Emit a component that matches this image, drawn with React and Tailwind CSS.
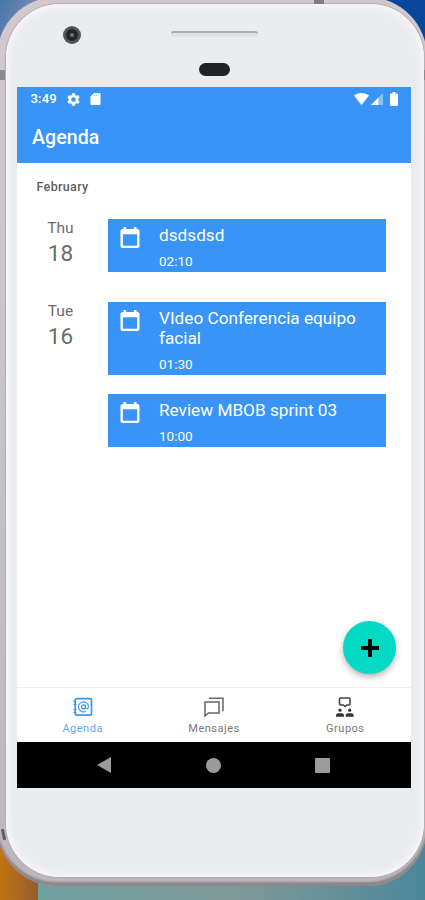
const days = [
  {
    weekday: "Thu",
    day: "18",
    events: [{ title: "dsdsdsd", time: "02:10" }],
  },
  {
    weekday: "Tue",
    day: "16",
    events: [
      { title: "VIdeo Conferencia equipo facial", time: "01:30" },
      { title: "Review MBOB sprint 03", time: "10:00" },
    ],
  },
];

function CalendarIcon() {
  return (
    <svg className="mt-[8px] h-[22px] w-[20px] shrink-0" viewBox="0 0 20 22" fill="#fff">
      <path
        fillRule="evenodd"
        d="M3.500 0h2.600v2h7.800V0h2.600v2h.9q2.100 0 2.100 2v15q0 2-2.100 2H2.600Q.5 21 .5 19V4q0-2 2.100-2h.9zM2.900 7.200v10.600q0 1 1 1h12.200q1 0 1-1V7.200z"
      />
    </svg>
  );
}

function AgendaIcon() {
  return (
    <svg className="h-5 w-5" viewBox="0 0 20 20" fill="none" stroke="#3b94f6">
      <rect x="2.200" y="1.600" width="16.300" height="16.600" rx="1.500" strokeWidth="1.700" />
      <path d="M.4 4.500h3M.4 7.500h3M.4 12.500h3M.4 15.500h3" strokeWidth="1.200" />
      <circle cx="10.500" cy="9.900" r="2" strokeWidth="1.100" />
      <path d="M12.600 7.800v2.600c0 2 2.900 1.700 2.900-.7a5 5 0 1 0-2.300 4.400" strokeWidth="1.100" />
    </svg>
  );
}

function MessagesIcon() {
  return (
    <svg className="h-5 w-5" viewBox="0 0 20 20" fill="none" stroke="#666" strokeWidth="1.500">
      <path d="M1 5h14v11H4.500L1 19V5z" />
      <path d="M5 1.200h14v13" />
    </svg>
  );
}

function GroupsIcon() {
  return (
    <svg className="h-5 w-5" viewBox="0 0 20 20" fill="#333">
      <path
        d="M5.500 1h8.500q1 0 1 1v5q0 1-1 1h-2.300L10 9.500 8.300 8H5.500q-1 0-1-1V2q0-1 1-1z"
        fill="none"
        stroke="#444"
        strokeWidth="1.600"
      />
      <circle cx="5" cy="13.200" r="1.600" />
      <circle cx="14.700" cy="13.200" r="1.600" />
      <path d="M1 19.800v-1.500q0-2 2.500-2h3q2.500 0 2.500 2v1.500zM10.700 19.800v-1.500q0-2 2.500-2h3q2.500 0 2.500 2v1.500z" />
    </svg>
  );
}

const tabs = [
  { label: "Agenda", icon: AgendaIcon, active: true },
  { label: "Mensajes", icon: MessagesIcon },
  { label: "Grupos", icon: GroupsIcon },
];

function StatusBar() {
  return (
    <div className="flex h-6 items-center pl-[13.500px] pr-[13px] text-white">
      <span className="w-[36px] text-[13px] font-medium tracking-[0.2px]">3:49</span>
      <svg className="h-[13px] w-[13px]" viewBox="2 2 20 20" fill="#fff">
        <path d="M19.140 12.940c.04-.3.06-.61.06-.94 0-.32-.02-.64-.07-.94l2.030-1.580c.18-.14.23-.41.12-.61l-1.920-3.320c-.12-.22-.37-.29-.59-.22l-2.390.96c-.5-.38-1.030-.7-1.620-.94l-.36-2.540c-.04-.24-.24-.41-.48-.41h-3.840c-.24 0-.43.17-.47.41l-.36 2.540c-.59.24-1.130.57-1.620.94l-2.390-.96c-.22-.08-.47 0-.59.22L2.740 8.870c-.12.21-.08.47.12.61l2.030 1.580c-.05.3-.09.63-.09.94s.02.64.07.94l-2.030 1.580c-.18.14-.23.41-.12.61l1.920 3.320c.12.22.37.29.59.22l2.390-.96c.5.38 1.030.7 1.620.94l.36 2.540c.05.24.24.41.48.41h3.840c.24 0 .44-.17.47-.41l.36-2.540c.59-.24 1.130-.56 1.620-.94l2.390.96c.22.08.47 0 .59-.22l1.920-3.320c.12-.22.07-.47-.12-.61l-2.010-1.580zM12 15.600a3.600 3.600 0 1 1 0-7.200 3.600 3.600 0 0 1 0 7.200z" />
      </svg>
      <svg className="ml-[10px] h-[12px] w-[11px]" viewBox="0 0 11 12" fill="#fff">
        <path d="M4 0h5.500Q10.500 0 10.500 1v10q0 1-1 1h-8q-1 0-1-1V3.500z" />
        <path d="M4.500 2v1.200M6.500 2v1.200M8.500 2v1.200" stroke="#3894f7" strokeWidth=".5" />
      </svg>
      <div className="ml-auto flex items-center">
        <svg className="h-[12px] w-[15px]" viewBox="0 0 15 12" fill="#fff">
          <path d="M0 2.500Q7.500-2.300 15 2.500L7.500 12z" />
        </svg>
        <svg className="ml-[2px] h-[12px] w-[12px]" viewBox="0 0 12 12" fill="#fff">
          <path d="M12 0v12H0z" opacity=".4" />
          <path d="M7.500 4.500V12H0z" />
        </svg>
        <svg className="ml-[7px] h-[14px] w-[8px]" viewBox="0 0 8 14" fill="#fff">
          <path d="M2.500 0h3v1.500H7q1 0 1 1V13q0 1-1 1H1q-1 0-1-1V2.500q0-1 1-1h1.500z" />
        </svg>
      </div>
    </div>
  );
}

function EventCard({ title, time }) {
  return (
    <div className="flex bg-[#3894f7] pl-[12px] pr-4 text-white">
      <CalendarIcon />
      <div className="ml-[19px] pt-[6px] pb-[2px]">
        <p className="text-[17.200px] leading-5">{title}</p>
        <p className="mt-[7px] text-[13.500px] leading-[18px]">{time}</p>
      </div>
    </div>
  );
}

function Wallpaper() {
  return (
    <div className="absolute inset-0">
      <div className="flex h-1/2">
        <div className="flex-1 bg-linear-to-br from-[#4675ad] to-[#8292ab] to-12%" />
        <div className="flex-1 bg-[#07479b]" />
      </div>
      <div className="flex h-1/2">
        <div className="w-[38px] bg-linear-to-r from-[#c27410] to-[#955d29]" />
        <div className="flex-1 bg-linear-to-r from-[#6fa0a0] via-[#7f9a98] to-[#4c8799]" />
      </div>
    </div>
  );
}

export default function App() {
  return (
    <main className="relative h-[900px] w-[425px] overflow-hidden font-['Roboto',sans-serif]">
      <Wallpaper />

      {/* Device rim */}
      <div className="relative -ml-[3px] -mt-[3px] h-[889px] w-[430px] rounded-[60px] bg-linear-to-b from-[#d3c8cd] via-[#c5c3c6] to-[#bdb6bc] pt-[7px] pr-[3px] pb-[9px] pl-[9px] shadow-[inset_0_-4px_2px_#8d878c]">
        {/* Side keys and antenna lines */}
        <div className="absolute left-[3px] top-[73px] h-[10px] w-[5px] bg-[#8c8a8d]" />
        <div className="absolute left-[317px] top-[3px] h-[4px] w-[10px] bg-[#827c80]" />
        <div className="absolute left-[5px] top-[832px] h-[11px] w-[3px] -rotate-12 bg-[#625d60]" />
        <div className="absolute left-[427px] top-[73px] h-[10px] w-px bg-[#8c8a8d]" />

        <div className="h-full rounded-[54px] bg-[#ebecee] pl-[11px] pr-[13px] shadow-[inset_0_0_6px_3px_#f7f7fa,0_0_1px_1px_#b1adb1]">
          <div className="relative h-[83px]">
            <div className="absolute left-[46px] top-[22px] flex h-[18px] w-[18px] items-center justify-center rounded-full bg-[#545557]">
              <div className="flex h-[12px] w-[12px] items-center justify-center rounded-full bg-[#252629]">
                <div className="h-[4px] w-[4px] rounded-full bg-[#727478]" />
              </div>
            </div>
            <div className="absolute left-[154px] top-[27px] h-[6px] w-[87px] rounded-[3px] border-t-2 border-[#aaabb1] bg-[#e0e0e5]" />
            <div className="absolute left-[182px] top-[59px] h-[13px] w-[31px] rounded-full bg-[#202225]" />
          </div>

          {/* Screen */}
          <div className="flex h-[701px] flex-col bg-white">
            <header className="h-[76px] bg-[#3894f7] text-white">
              <StatusBar />
              <h1 className="pl-[15px] pt-[15px] text-[19.500px] font-medium leading-6 tracking-[0.1px]">
                Agenda
              </h1>
            </header>

            <section className="relative flex-1">
              <h2 className="h-[56px] pl-[19.500px] pt-4 text-[12.500px] font-medium leading-4 tracking-[0.35px] text-[#606060]">
                February
              </h2>
              <div className="flex flex-col gap-[30px]">
                {days.map((d) => (
                  <div key={d.day} className="flex">
                    <div className="w-[91px] pr-[4px] text-center text-[#6c6c6c]">
                      <p className="text-[15.500px] leading-[18px]">{d.weekday}</p>
                      <p className="mt-[2px] text-[22.500px] leading-[28px]">{d.day}</p>
                    </div>
                    <div className="flex w-[278px] flex-col gap-[19px]">
                      {d.events.map((e) => (
                        <EventCard key={e.title} {...e} />
                      ))}
                    </div>
                  </div>
                ))}
              </div>
              <button className="absolute bottom-[13px] right-[15px] flex h-[53px] w-[53px] items-center justify-center rounded-full bg-[#03dac5] shadow-[0_3px_6px_rgba(0,0,0,0.3)]">
                <svg className="h-[18px] w-[18px]" viewBox="0 0 18 18" stroke="#000" strokeWidth="4">
                  <path d="M9 0v18M0 9h18" />
                </svg>
              </button>
            </section>

            <nav className="flex h-[55px] border-t border-[#f0f0f0]">
              {tabs.map(({ label, icon: Icon, active }) => (
                <div key={label} className="flex flex-1 flex-col items-center pt-[9px]">
                  <Icon />
                  <span
                    className={`mt-[4px] text-[11px] leading-4 tracking-[0.5px] ${
                      active ? "text-[#5ca6f8]" : "text-[#777]"
                    }`}
                  >
                    {label}
                  </span>
                </div>
              ))}
            </nav>

            <div className="flex h-[46px] items-center bg-black pr-[2px]">
              <div className="flex flex-1 justify-end pr-[37px]">
                <svg className="h-4 w-[14px]" viewBox="0 0 14 16" fill="#9b9b9b">
                  <path d="M14 0v16L0 8z" />
                </svg>
              </div>
              <div className="flex w-[131px] justify-center">
                <div className="h-[15px] w-[15px] rounded-full bg-[#9b9b9b]" />
              </div>
              <div className="flex-1 pl-[36px]">
                <div className="h-[15px] w-[15px] rounded-[1px] bg-[#9b9b9b]" />
              </div>
            </div>
          </div>
        </div>
      </div>
    </main>
  );
}
